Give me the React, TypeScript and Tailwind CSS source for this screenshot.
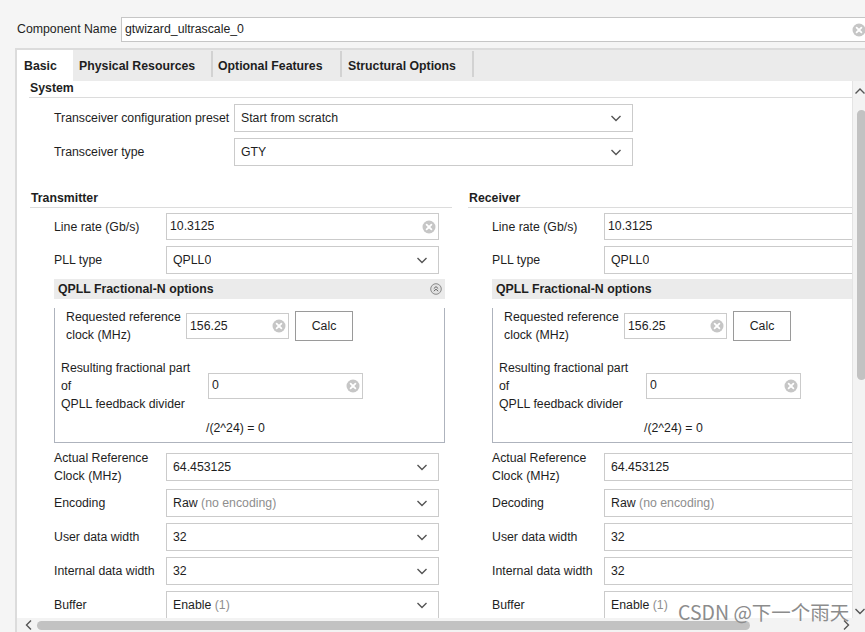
import React from 'react';

const ClearIcon = () => (
  <svg width="14" height="14" viewBox="0 0 14 14" className="shrink-0">
    <circle cx="7" cy="7" r="6.5" fill="#c6c6c6" />
    <path d="M4.6 4.6l4.8 4.8M9.4 4.6l-4.8 4.8" stroke="#fff" strokeWidth="1.8" strokeLinecap="round" />
  </svg>
);

const Chevron = ({ dir = 'down' }: { dir?: 'down' | 'up' | 'left' | 'right' }) => {
  const d = {
    down: 'M1.5 2l4.5 4.5 4.5-4.5',
    up: 'M1.5 6.5l4.5-4.5 4.5 4.5',
    left: 'M7 1.5l-4.5 4.5 4.5 4.5',
    right: 'M3 1.5l4.5 4.5-4.5 4.5',
  }[dir];
  const horiz = dir === 'down' || dir === 'up';
  return (
    <svg width={horiz ? 12 : 9} height={horiz ? 8 : 12} viewBox={horiz ? '0 0 12 8' : '0 0 9 12'} className="shrink-0">
      <path d={d} fill="none" stroke="#555" strokeWidth="1.4" />
    </svg>
  );
};

const CollapseIcon = () => (
  <svg width="12" height="12" viewBox="0 0 12 12">
    <circle cx="6" cy="6" r="5.3" fill="#e2e2e2" stroke="#8a8a8a" strokeWidth="1" />
    <path d="M3.8 5.6L6 3.6l2.2 2M3.8 8.2L6 6.2l2.2 2" fill="none" stroke="#666" strokeWidth="1" />
  </svg>
);

type BoxProps = { value: React.ReactNode; kind?: 'select' | 'clear'; className?: string };

const Box = ({ value, kind = 'select', className = '' }: BoxProps) => (
  <div
    className={`flex shrink-0 items-center justify-between border border-[#cbcbcb] bg-white ${
      kind === 'select' ? 'pl-[6px] pr-[10px]' : 'pl-[3px] pr-[2px]'
    } ${className}`}
  >
    <span className="truncate">{value}</span>
    {kind === 'select' ? <Chevron /> : <ClearIcon />}
  </div>
);

const Muted = ({ main, note }: { main: string; note: string }) => (
  <>
    {main} <span className="text-[#8e8e8e]">{note}</span>
  </>
);

const Row = ({ label, children, className = '' }: { label: React.ReactNode; children: React.ReactNode; className?: string }) => (
  <div className={`flex items-center pl-[24px] ${className}`}>
    <div className="w-[112px] shrink-0 leading-[18px]">{label}</div>
    {children}
  </div>
);

const Column = ({ title, codingLabel }: { title: string; codingLabel: string }) => (
  <div className="w-[422px] shrink-0">
    <div className="h-[18px] border-b border-[#dcdcdc] pl-[1px] font-bold leading-[16px]">{title}</div>

    <Row label="Line rate (Gb/s)" className="mt-[5px]">
      <Box value="10.3125" kind="clear" className="h-[27px] w-[273px]" />
    </Row>
    <Row label="PLL type" className="mt-[6px]">
      <Box value="QPLL0" className="h-[28px] w-[273px]" />
    </Row>

    <div className="ml-[24px] mt-[5px] w-[391px]">
      <div className="flex h-[20px] items-center justify-between bg-[#ebebeb] pl-[4px] pr-[3px] font-bold">
        <span>QPLL Fractional-N options</span>
        <CollapseIcon />
      </div>
      <div className="border border-t-0 border-[#aeb3bd] pb-[5px]">
        <div className="mt-[9px] flex h-[36px] items-center pl-[11px]">
          <div className="w-[120px] shrink-0 leading-[18px]">
            Requested reference
            <br />
            clock (MHz)
          </div>
          <Box value="156.25" kind="clear" className="h-[26px] w-[103px]" />
          <button className="ml-[6px] h-[30px] w-[58px] shrink-0 border border-[#9a9a9a] bg-white">Calc</button>
        </div>
        <div className="mt-[14px] flex h-[55px] items-center pl-[6px]">
          <div className="w-[147px] shrink-0 leading-[18px]">
            Resulting fractional part
            <br />
            of
            <br />
            QPLL feedback divider
          </div>
          <Box value="0" kind="clear" className="h-[26px] w-[155px]" />
        </div>
        <div className="mt-[6px] h-[18px] pl-[151px] leading-[18px]">/(2^24) = 0</div>
      </div>
    </div>

    <Row
      label={
        <>
          Actual Reference
          <br />
          Clock (MHz)
        </>
      }
      className="mt-[6px] h-[36px]"
    >
      <Box value="64.453125" className="h-[28px] w-[273px]" />
    </Row>
    <Row label={codingLabel} className="mt-[4px]">
      <Box value={<Muted main="Raw" note="(no encoding)" />} className="h-[28px] w-[273px]" />
    </Row>
    <Row label="User data width" className="mt-[6px]">
      <Box value="32" className="h-[28px] w-[273px]" />
    </Row>
    <Row label="Internal data width" className="mt-[6px]">
      <Box value="32" className="h-[28px] w-[273px]" />
    </Row>
    <Row label="Buffer" className="mt-[6px]">
      <Box value={<Muted main="Enable" note="(1)" />} className="h-[28px] w-[273px]" />
    </Row>
  </div>
);

const App: React.FC = () => {
  return (
    <div className="relative h-[632px] w-[865px] overflow-hidden bg-[#f5f5f5] font-['Liberation_Sans',Arial,sans-serif] text-[12.3px] text-[#1e1e1e]">
      {/* component name */}
      <div className="flex h-[48px] items-start pl-[17px] pt-[17px]">
        <span className="w-[104px] shrink-0 leading-[25px]">Component Name</span>
        <div className="flex h-[25px] w-[750px] shrink-0 items-center justify-between border-y border-l border-[#c6c6c6] bg-white pl-[3px] pr-[5px]">
          <span>gtwizard_ultrascale_0</span>
          <ClearIcon />
        </div>
      </div>

      {/* tabbed panel */}
      <div className="ml-[15px] w-[852px] border-l-2 border-t-2 border-[#dcdcdc]">
        <div className="flex h-[31px] bg-[#ebebeb] font-bold">
          <div className="flex w-[56px] items-center bg-white pl-[7px] pt-[2px]">Basic</div>
          <div className="flex w-[138px] items-center pl-[6px] pt-[2px]">Physical Resources</div>
          <div className="mt-[1px] h-[26px] w-[2px] bg-[#d2d2d2]" />
          <div className="flex w-[127px] items-center pl-[5px] pt-[2px]">Optional Features</div>
          <div className="mt-[1px] h-[26px] w-[2px] bg-[#d2d2d2]" />
          <div className="flex w-[130px] items-center pl-[6px] pt-[2px]">Structural Options</div>
          <div className="mt-[1px] h-[26px] w-[2px] bg-[#d2d2d2]" />
        </div>

        <div className="flex h-[537px]">
          <div className="w-[835px] shrink-0 overflow-hidden bg-white">
            <div className="ml-[12px] h-[17px] border-b border-[#dcdcdc] pl-[1px] font-bold leading-[14px]">System</div>
            <div className="mt-[6px] flex items-center pl-[37px]">
              <div className="w-[180px] shrink-0">Transceiver configuration preset</div>
              <Box value="Start from scratch" className="h-[28px] w-[399px]" />
            </div>
            <div className="mt-[6px] flex items-center pl-[37px]">
              <div className="w-[180px] shrink-0">Transceiver type</div>
              <Box value="GTY" className="h-[28px] w-[399px]" />
            </div>

            <div className="mt-[24px] flex gap-[16px] pl-[13px]">
              <Column title="Transmitter" codingLabel="Encoding" />
              <Column title="Receiver" codingLabel="Decoding" />
            </div>
          </div>

          {/* vertical scrollbar */}
          <div className="flex w-[14px] shrink-0 flex-col items-center border-l border-[#e4e4e4] bg-[#f3f3f3] pt-[6px]">
            <Chevron dir="up" />
            <div className="mt-[15px] h-[270px] w-[9px] self-end rounded-full bg-[#c2c2c2]" />
            <div className="mt-auto mb-[3px]">
              <Chevron dir="down" />
            </div>
          </div>
        </div>

        {/* horizontal scrollbar */}
        <div className="flex h-[14px] items-center bg-[#f3f3f3] pl-[7px]">
          <Chevron dir="left" />
          <div className="ml-[4px] h-[9px] w-[713px] rounded-full bg-[#c2c2c2]" />
          <div className="ml-[91px]">
            <Chevron dir="right" />
          </div>
        </div>
      </div>

      <div className="pointer-events-none absolute left-[678px] top-[599px] font-['Noto_Sans_CJK_SC',sans-serif] text-[19.5px] leading-[26px] text-[#8c8c8c]">
        CSDN @下一个雨天
      </div>
    </div>
  );
};

export default App;
